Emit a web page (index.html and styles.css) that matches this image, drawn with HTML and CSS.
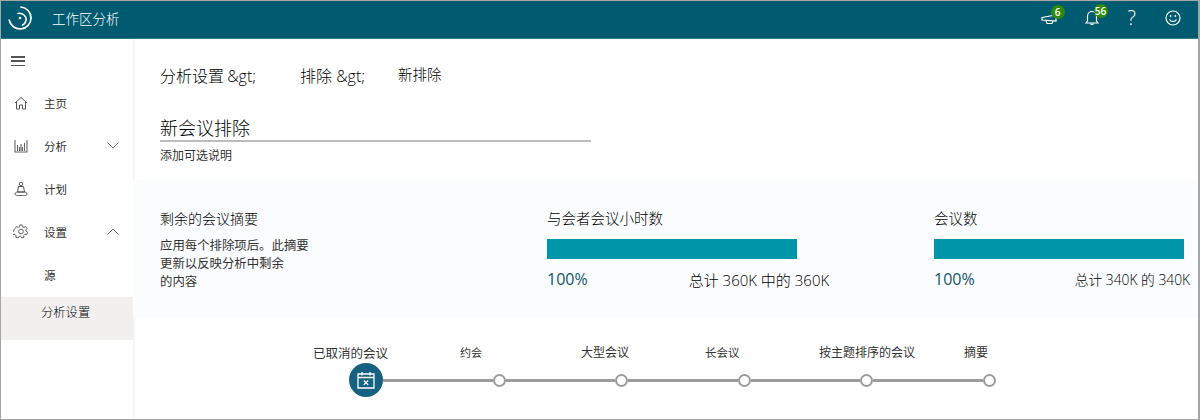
FILE: index.html
```html
<!DOCTYPE html>
<html lang="zh-CN">
<head>
<meta charset="utf-8">
<title>工作区分析</title>
<link rel="stylesheet" href="styles.css">
</head>
<body>
<div class="app">
  <header class="topbar">
    <svg class="logo" width="26" height="26" viewBox="0 0 26 26" fill="none" stroke="#fff" stroke-linecap="round"><path d="M14 2A11 11 0 1 1 2.200 15" stroke-width="1.700"/><path d="M11 8.500C16 7.500 20 12 19 15.500 18.500 17.500 17 19.500 15.500 20" stroke-width="1.500"/><circle cx="13" cy="13" r="1.300" fill="#fff" stroke="none"/></svg>
    <span class="brand">工作区分析</span>
    <div class="top-icons">
      <div class="ti ti-a">
        <svg width="18" height="14" viewBox="0 0 18 14" fill="none" stroke="#fff" stroke-width="1.200"><path d="M1 4.500l14-2.500v6l-14-1z"/><path d="M5 7.500l1 3h5l1-2.500"/></svg>
        <span class="badge">6</span>
      </div>
      <div class="ti ti-b">
        <svg width="14" height="18" viewBox="0 0 14 18" fill="none" stroke="#fff" stroke-width="1.200"><path d="M1 14h12l-1.500-2V7a4.500 4.500 0 0 0-9 0v5z"/><path d="M5.500 14.500a1.600 1.600 0 0 0 3 0"/></svg>
        <span class="badge">56</span>
      </div>
      <span class="help">?</span>
      <svg width="16" height="16" viewBox="0 0 16 16" fill="none" stroke="#fff" stroke-width="1.200"><circle cx="8" cy="8" r="7"/><circle cx="5.600" cy="6" r=".9" fill="#fff" stroke="none"/><circle cx="10.400" cy="6" r=".9" fill="#fff" stroke="none"/><path d="M4.500 9.500a4 4 0 0 0 7 0"/></svg>
    </div>
  </header>
  <div class="body">
    <nav class="side">
      <div class="burger"><i></i><i></i><i></i></div>
      <div class="nav-item">
        <svg class="nav-icon" width="14" height="14" viewBox="0 0 14 14" fill="none" stroke="#555" stroke-width="1"><path d="M1 7l6-5.500L13 7M2.500 6v7h3V9h3v4h3V6"/></svg>
        <span>主页</span>
      </div>
      <div class="nav-item">
        <svg class="nav-icon" width="14" height="14" viewBox="0 0 14 14" fill="none" stroke="#666" stroke-width="1.100"><path d="M1 1v12h12V1"/><path d="M3.500 12V6M5.500 12V8M7 12V5M8.500 12V8M10.500 12V4"/></svg>
        <span>分析</span>
        <svg class="chev" width="12" height="7" viewBox="0 0 12 7" fill="none" stroke="#777"><path d="M.5.5L6 6 11.500.5"/></svg>
      </div>
      <div class="nav-item">
        <svg class="nav-icon" width="14" height="16" viewBox="0 0 14 16" fill="none" stroke="#555" stroke-width="1"><circle cx="7" cy="3" r="1.800"/><path d="M4.500 5.500h5L10.500 11h-7zM1 13c0-1.500 2-2 2.500-2h7c.5 0 2.500.5 2.500 2s-2 1.500-6 1.500S1 14.500 1 13z"/></svg>
        <span>计划</span>
      </div>
      <div class="nav-item">
        <svg class="nav-icon" width="15" height="15" viewBox="0 0 16 16" fill="none" stroke="#555" stroke-width="1"><circle cx="8" cy="8" r="2.500"/><path d="M6.700 1h2.600l.4 2 1.500.7 1.800-1 1.500 2-1.300 1.600.2 1.500 1.600 1-.9 2.400-2-.2-1.100 1.200.1 2-2.500.6-1-1.800h-1.600l-1 1.800-2.500-.6.100-2-1.100-1.200-2 .2-.9-2.400 1.600-1 .2-1.500L1.700 4.700l1.500-2 1.800 1 1.500-.7z"/></svg>
        <span>设置</span>
        <svg class="chev" width="12" height="7" viewBox="0 0 12 7" fill="none" stroke="#777"><path d="M.5 6.500L6 1l5.500 5.500"/></svg>
      </div>
      <div class="sub-item">源</div>
      <div class="sub-item active">分析设置</div>
    </nav>
    <main class="main">
      <div class="crumbs">
        <span class="crumb c1">分析设置 &amp;gt;</span>
        <span class="crumb c2">排除 &amp;gt;</span>
        <span class="crumb-now">新排除</span>
      </div>
      <div class="name-block">
        <div class="name">新会议排除</div>
        <div class="desc">添加可选说明</div>
      </div>
      <section class="summary">
        <div class="sum-text">
          <h2>剩余的会议摘要</h2>
          <p>应用每个排除项后。此摘要<br>更新以反映分析中剩余<br>的内容</p>
        </div>
        <div class="metric m1">
          <h2>与会者会议小时数</h2>
          <div class="bar"></div>
          <div class="stats"><span class="pct">100%</span><span class="total t1">总计 360K 中的 360K</span></div>
        </div>
        <div class="metric m2">
          <h2>会议数</h2>
          <div class="bar"></div>
          <div class="stats"><span class="pct">100%</span><span class="total t2">总计 340K 的 340K</span></div>
        </div>
      </section>
      <section class="stepper">
        <div class="labels">
          <span class="lb l1">已取消的会议</span>
          <span class="lb l2">约会</span>
          <span class="lb l3">大型会议</span>
          <span class="lb l4">长会议</span>
          <span class="lb l5">按主题排序的会议</span>
          <span class="lb l6">摘要</span>
        </div>
        <div class="track">
          <div class="node-main">
            <svg width="18" height="18" viewBox="0 0 18 18" fill="none" stroke="#fff" stroke-width="1.300"><path d="M1 3h16v14H1zM1 6.500h16M5 1v3.500M13 1v3.500"/><path d="M6.800 9.500l4.400 4.400M11.200 9.500l-4.400 4.400"/></svg>
          </div>
          <i class="link"></i><i class="node"></i>
          <i class="link"></i><i class="node"></i>
          <i class="link"></i><i class="node"></i>
          <i class="link"></i><i class="node"></i>
          <i class="link"></i><i class="node"></i>
        </div>
      </section>
    </main>
  </div>
</div>
</body>
</html>
```
FILE: styles.css
```css
* { box-sizing: border-box; }
html, body { margin: 0; padding: 0; }
body {
  width: 1200px;
  height: 420px;
  overflow: hidden;
  background: #fff;
  color: #000;
  font-family: "Open Sans", "Noto Sans CJK SC", sans-serif;
  font-weight: 300;
}
.app {
  width: 1200px;
  height: 420px;
  display: flex;
  flex-direction: column;
  border: 1px solid #a6a6a6;
  border-right-width: 2px;
}
.topbar {
  height: 38px;
  flex: none;
  background: #005a70;
  color: #fff;
  display: flex;
  align-items: center;
  padding: 0 0 3px 6px;
  border-bottom: 1px solid #2f7a8c;
}
.logo { flex: none; }
.brand { font-size: 13.500px; margin-left: 19px; }
.top-icons {
  margin-left: auto;
  display: flex;
  align-items: center;
  padding-right: 17px;
}
.ti { position: relative; display: flex; }
.ti-a { margin: 4px 26px 0 0; }
.ti-b { margin-right: 29px; }
.badge {
  position: absolute;
  min-width: 14px;
  height: 14px;
  padding: 0 1px;
  border-radius: 7px;
  background: #2f8a0a;
  color: #fff;
  font-size: 10px;
  line-height: 14px;
  text-align: center;
  font-weight: 600;
}
.ti-a .badge { left: 10px; top: -8px; }
.ti-b .badge { left: 9px; top: -5px; }
.help { font-size: 20px; line-height: 20px; margin-right: 29px; font-family: "Open Sans", sans-serif; }
.body { flex: 1; display: flex; min-height: 0; }
.side {
  width: 132px;
  flex: none;
  box-shadow: 1px 0 3px rgba(0, 0, 0, .08);
  display: flex;
  flex-direction: column;
  font-size: 11.500px;
  font-weight: 400;
  color: #333;
}
.burger {
  height: 10px;
  margin: 17px 0 0 10px;
  display: flex;
  flex-direction: column;
  justify-content: space-between;
  width: 14px;
}
.burger i { height: 1.500px; background: #555; display: block; }
.nav-item {
  height: 43px;
  display: flex;
  align-items: center;
  padding-left: 12px;
  position: relative;
}
.burger + .nav-item { margin-top: 15px; }
.nav-icon { flex: none; width: 16px; }
.nav-item span { margin-left: 15px; }
.chev { position: absolute; left: 106px; top: 18px; }
.sub-item { height: 43px; display: flex; align-items: center; padding-left: 43px; }
.sub-item.active { background: #f1f0ef; padding-left: 40px; align-items: flex-start; padding-top: 6px; font-size: 12.300px; margin-top: 1px; font-weight: 300; color: #000; }
.main { flex: 1; min-width: 0; display: flex; flex-direction: column; }
.crumbs {
  height: 40px;
  margin-top: 16px;
  padding-left: 27px;
  display: flex;
  align-items: center;
  font-size: 16px;
}
.c1 { width: 140px; word-spacing: -1px; }
.c2 { width: 98px; }
.crumb-now { font-size: 14.500px; margin-bottom: 3px; font-weight: 300; }
.name-block { margin: 21px 0 0 27px; height: 64px; }
.name {
  width: 431px;
  height: 26px;
  font-size: 18px;
  line-height: 25px;
  border-bottom: 2px solid #bdbdbd;
}
.desc { font-size: 12px; line-height: 16px; margin-top: 6px; font-weight: 400; color: #333; }
.summary {
  height: 138px;
  background: #fbfcfe;
  display: flex;
  padding: 30px 0 0 27px;
}
.summary h2 { margin: 0; font-size: 14px; font-weight: 300; line-height: 18px; }
.sum-text { width: 387px; }
.sum-text p { margin: 9px 0 0; font-size: 12.400px; line-height: 18px; font-weight: 400; color: #333; }
.metric { width: 250px; }
.m1 { margin-right: 137px; }
.metric h2 { font-size: 14.500px; }
.bar { height: 20px; background: #0096aa; margin-top: 11px; }
.stats { display: flex; margin-top: 9px; align-items: center; position: relative; }
.pct { font-size: 16px; color: #10566c; font-weight: 500; }
.total { font-size: 15px; white-space: nowrap; }
.t1 { margin-left: 101px; }
.t2 { margin-left: 100px; font-size: 13.800px; }
.stepper { padding-top: 25px; }
.labels { display: flex; height: 21px; align-items: flex-start; padding-left: 180px; font-size: 12px; font-weight: 400; color: #333; }
.lb { white-space: nowrap; }
.l1 { font-size: 12.500px; width: 147px; }
.l2 { font-size: 11px; width: 121px; padding-top: 1px; }
.l3 { width: 124px; }
.l4 { width: 114px; font-size: 11.500px; padding-top: 1px; }
.l5 { width: 145px; }
.track { display: flex; align-items: center; margin: -1px 0 0 216px; }
.node-main {
  width: 34px;
  height: 34px;
  border-radius: 50%;
  background: #16617f;
  display: flex;
  align-items: center;
  justify-content: center;
  flex: none;
}
.link { width: 109.500px; height: 3px; background: #9c9c9c; flex: none; }
.node { width: 13px; height: 13px; border: 2px solid #9c9c9c; border-radius: 50%; background: #fff; flex: none; }
```
